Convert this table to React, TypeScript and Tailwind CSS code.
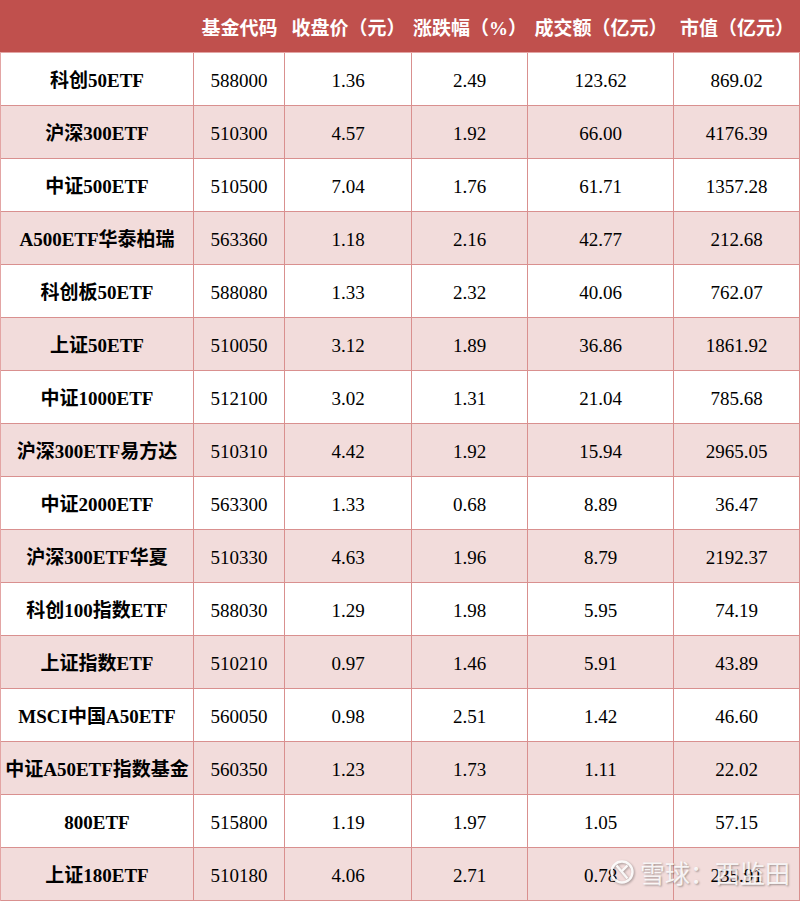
import React from "react";

const rows: string[][] = [
  ["科创50ETF", "588000", "1.36", "2.49", "123.62", "869.02"],
  ["沪深300ETF", "510300", "4.57", "1.92", "66.00", "4176.39"],
  ["中证500ETF", "510500", "7.04", "1.76", "61.71", "1357.28"],
  ["A500ETF华泰柏瑞", "563360", "1.18", "2.16", "42.77", "212.68"],
  ["科创板50ETF", "588080", "1.33", "2.32", "40.06", "762.07"],
  ["上证50ETF", "510050", "3.12", "1.89", "36.86", "1861.92"],
  ["中证1000ETF", "512100", "3.02", "1.31", "21.04", "785.68"],
  ["沪深300ETF易方达", "510310", "4.42", "1.92", "15.94", "2965.05"],
  ["中证2000ETF", "563300", "1.33", "0.68", "8.89", "36.47"],
  ["沪深300ETF华夏", "510330", "4.63", "1.96", "8.79", "2192.37"],
  ["科创100指数ETF", "588030", "1.29", "1.98", "5.95", "74.19"],
  ["上证指数ETF", "510210", "0.97", "1.46", "5.91", "43.89"],
  ["MSCI中国A50ETF", "560050", "0.98", "2.51", "1.42", "46.60"],
  ["中证A50ETF指数基金", "560350", "1.23", "1.73", "1.11", "22.02"],
  ["800ETF", "515800", "1.19", "1.97", "1.05", "57.15"],
  ["上证180ETF", "510180", "4.06", "2.71", "0.78", "235.91"],
];

const headers = ["", "基金代码", "收盘价（元）", "涨跌幅（%）", "成交额（亿元）", "市值（亿元）"];

const font = { fontFamily: '"Liberation Serif", "Noto Sans CJK SC", serif' };

export default function App() {
  return (
    <div className="relative w-[800px] h-[901px] bg-white overflow-hidden" style={font}>
      <div className="grid grid-cols-[194px_91px_127px_116px_146px_126px] h-[52px] bg-[#c0504d] text-white text-[19px] font-bold">
        {headers.map((h, i) => (
          <div key={i} className="flex items-center justify-center pt-[6px] whitespace-nowrap">
            {h}
          </div>
        ))}
      </div>
      <div className="border-t border-[#e3a5a4] border-l">
        {rows.map((r, ri) => (
          <div
            key={ri}
            className={`grid grid-cols-[193px_91px_127px_116px_146px_126px] h-[53px] border-b border-[#d9908f] ${
              ri % 2 === 1 ? "bg-[#f2dcdb]" : "bg-white"
            }`}
          >
            {r.map((c, ci) => (
              <div
                key={ci}
                className={`flex items-center justify-center border-r border-[#d9908f] text-[19px] text-black whitespace-nowrap pt-[5px] ${
                  ci === 0 ? "font-bold" : ""
                }`}
              >
                {c}
              </div>
            ))}
          </div>
        ))}
      </div>
      <div
        className="absolute left-[610px] top-[857px] flex items-center gap-[6px] text-white/85"
        style={{ textShadow: "1px 1px 2px rgba(0,0,0,0.35)" }}
      >
        <svg width="24" height="30" viewBox="0 0 24 30" className="drop-shadow-[1px_1px_1px_rgba(0,0,0,0.35)]">
          <circle cx="12" cy="15" r="10.5" fill="none" stroke="rgba(255,255,255,0.9)" strokeWidth="2.4" />
          <path d="M6.5 8.5 L17.5 21.5 M17.5 8.5 L11 15" stroke="rgba(255,255,255,0.9)" strokeWidth="2.4" fill="none" />
        </svg>
        <span className="text-[25px] leading-none" style={{ fontFamily: '"Noto Sans CJK SC", sans-serif' }}>
          雪球：西监田
        </span>
      </div>
    </div>
  );
}
